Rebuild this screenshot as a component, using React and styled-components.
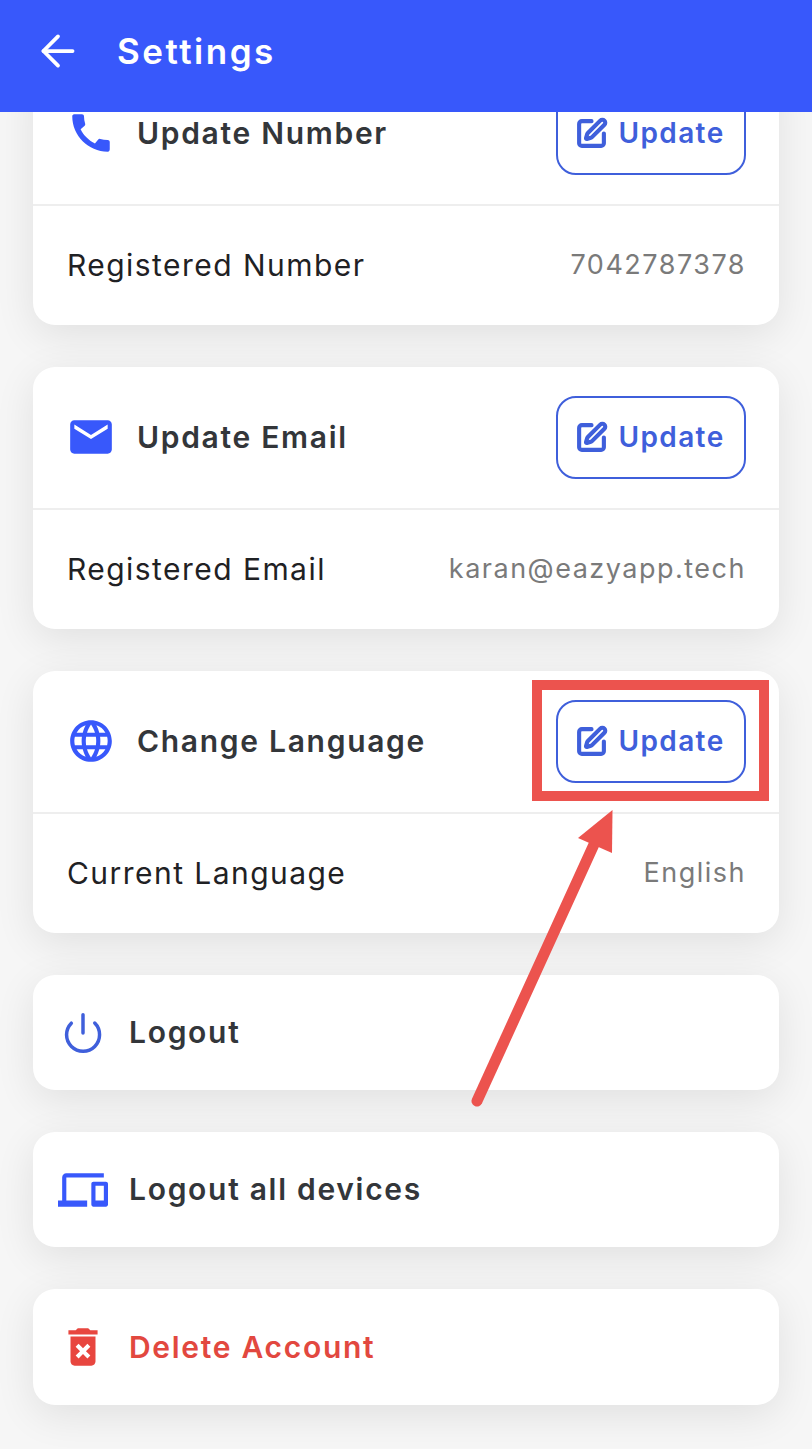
import React from "react";
import styled, { createGlobalStyle } from "styled-components";
import { MdCall, MdEmail, MdLanguage, MdDevices, MdDeleteForever } from "react-icons/md";
import { ArrowLeft, SquarePen, Power } from "lucide-react";

const Global = createGlobalStyle`
  html, body { margin: 0; padding: 0; background: #f6f6f6; }
  * { box-sizing: border-box; }
`;

const Page = styled.div`
  position: relative;
  width: 812px;
  height: 1449px;
  overflow: hidden;
  display: flex;
  flex-direction: column;
  background: #f6f6f6;
  font-family: "Inter", "Noto Sans", sans-serif;
`;

const Header = styled.header`
  position: relative;
  z-index: 2;
  flex: 0 0 112px;
  display: flex;
  align-items: center;
  gap: 34px;
  padding: 0 0 10px 33px;
  background: #3858fb;
  color: #fff;
`;

const Title = styled.h1`
  margin: 0;
  font-size: 35px;
  font-weight: 600;
  letter-spacing: 2.5px;
`;

const List = styled.main`
  flex: 1;
  display: flex;
  flex-direction: column;
  gap: 42px;
  margin-top: -49px;
  padding: 0 33px;
`;

const Card = styled.section`
  flex: none;
  background: #fff;
  border-radius: 22px;
  box-shadow: 0 10px 40px rgba(0, 0, 0, 0.09);
  overflow: hidden;
`;

const TopRow = styled.div`
  height: 143px;
  display: flex;
  align-items: center;
  justify-content: space-between;
  padding: 0 33px 1px;
  border-bottom: 2px solid #eeeeee;
`;

const Heading = styled.div`
  display: flex;
  align-items: center;
  gap: 21px;
  color: #33363a;
  font-size: 30px;
  font-weight: 600;
  letter-spacing: 1.7px;
`;

const IconSlot = styled.span`
  display: flex;
  width: 50px;
  height: 50px;
  align-items: center;
  justify-content: center;
  color: ${(p) => p.$color || "#3858fb"};
`;

const UpdateButton = styled.button`
  width: 190px;
  height: 83px;
  display: flex;
  align-items: center;
  justify-content: center;
  gap: 10px;
  padding: 0 2px 0 0;
  background: #fff;
  border: 2px solid #3f5fdb;
  border-radius: 20px;
  color: #3f5fdb;
  font-family: inherit;
  font-size: 28px;
  font-weight: 600;
  letter-spacing: 1.4px;
`;

const InfoRow = styled.div`
  height: 119px;
  display: flex;
  align-items: center;
  justify-content: space-between;
  padding: 0 33px;
`;

const Label = styled.span`
  color: #1f2124;
  font-size: 30px;
  letter-spacing: 1.45px;
  padding: 0 0 2px 1px;
`;

const Value = styled.span`
  color: #7a7a7a;
  font-size: 27px;
  letter-spacing: 1.5px;
  padding-bottom: 2px;
`;

const ActionCard = styled(Card)`
  height: 115px;
  display: flex;
  align-items: center;
  gap: 21px;
  padding: 0 0 0 25px;
  &:last-child { height: 116px; }
`;

const ActionText = styled.span`
  color: ${(p) => p.$color || "#33363a"};
  font-size: 30px;
  font-weight: 600;
  letter-spacing: 1.7px;
  padding-bottom: 1px;
`;

const Highlight = styled.div`
  position: absolute;
  left: 532px;
  top: 680px;
  width: 237px;
  height: 121px;
  border: 10px solid #ec534e;
  z-index: 3;
`;

const Arrow = styled.svg`
  position: absolute;
  left: 460px;
  top: 800px;
  z-index: 3;
`;

const Account = ({ icon, title, label, value }) => (
  <Card>
    <TopRow>
      <Heading>
        <IconSlot>{icon}</IconSlot>
        {title}
      </Heading>
      <UpdateButton>
        <SquarePen size={33} strokeWidth={3} />
        Update
      </UpdateButton>
    </TopRow>
    <InfoRow>
      <Label>{label}</Label>
      <Value>{value}</Value>
    </InfoRow>
  </Card>
);

export default function App() {
  return (
    <Page>
      <Global />
      <Header>
        <ArrowLeft size={50} strokeWidth={1.8} />
        <Title>Settings</Title>
      </Header>
      <List>
        <Account icon={<MdCall size={50} />} title="Update Number" label="Registered Number" value="7042787378" />
        <Account icon={<MdEmail size={50} />} title="Update Email" label="Registered Email" value="karan@eazyapp.tech" />
        <Account icon={<MdLanguage size={50} />} title="Change Language" label="Current Language" value="English" />
        <ActionCard>
          <IconSlot $color="#3f5fdb"><Power size={44} strokeWidth={1.9} /></IconSlot>
          <ActionText>Logout</ActionText>
        </ActionCard>
        <ActionCard>
          <IconSlot><MdDevices size={50} /></IconSlot>
          <ActionText>Logout all devices</ActionText>
        </ActionCard>
        <ActionCard>
          <IconSlot $color="#e8463f"><MdDeleteForever size={50} /></IconSlot>
          <ActionText $color="#e2483f">Delete Account</ActionText>
        </ActionCard>
      </List>
      <Highlight />
      <Arrow width="170" height="320" viewBox="0 0 170 320">
        <path d="M17 301 L136 40" stroke="#ec534e" strokeWidth="11" strokeLinecap="round" fill="none" />
        <path d="M152.500 10 L118 38 L152 53 Z" fill="#ec534e" />
      </Arrow>
    </Page>
  );
}
